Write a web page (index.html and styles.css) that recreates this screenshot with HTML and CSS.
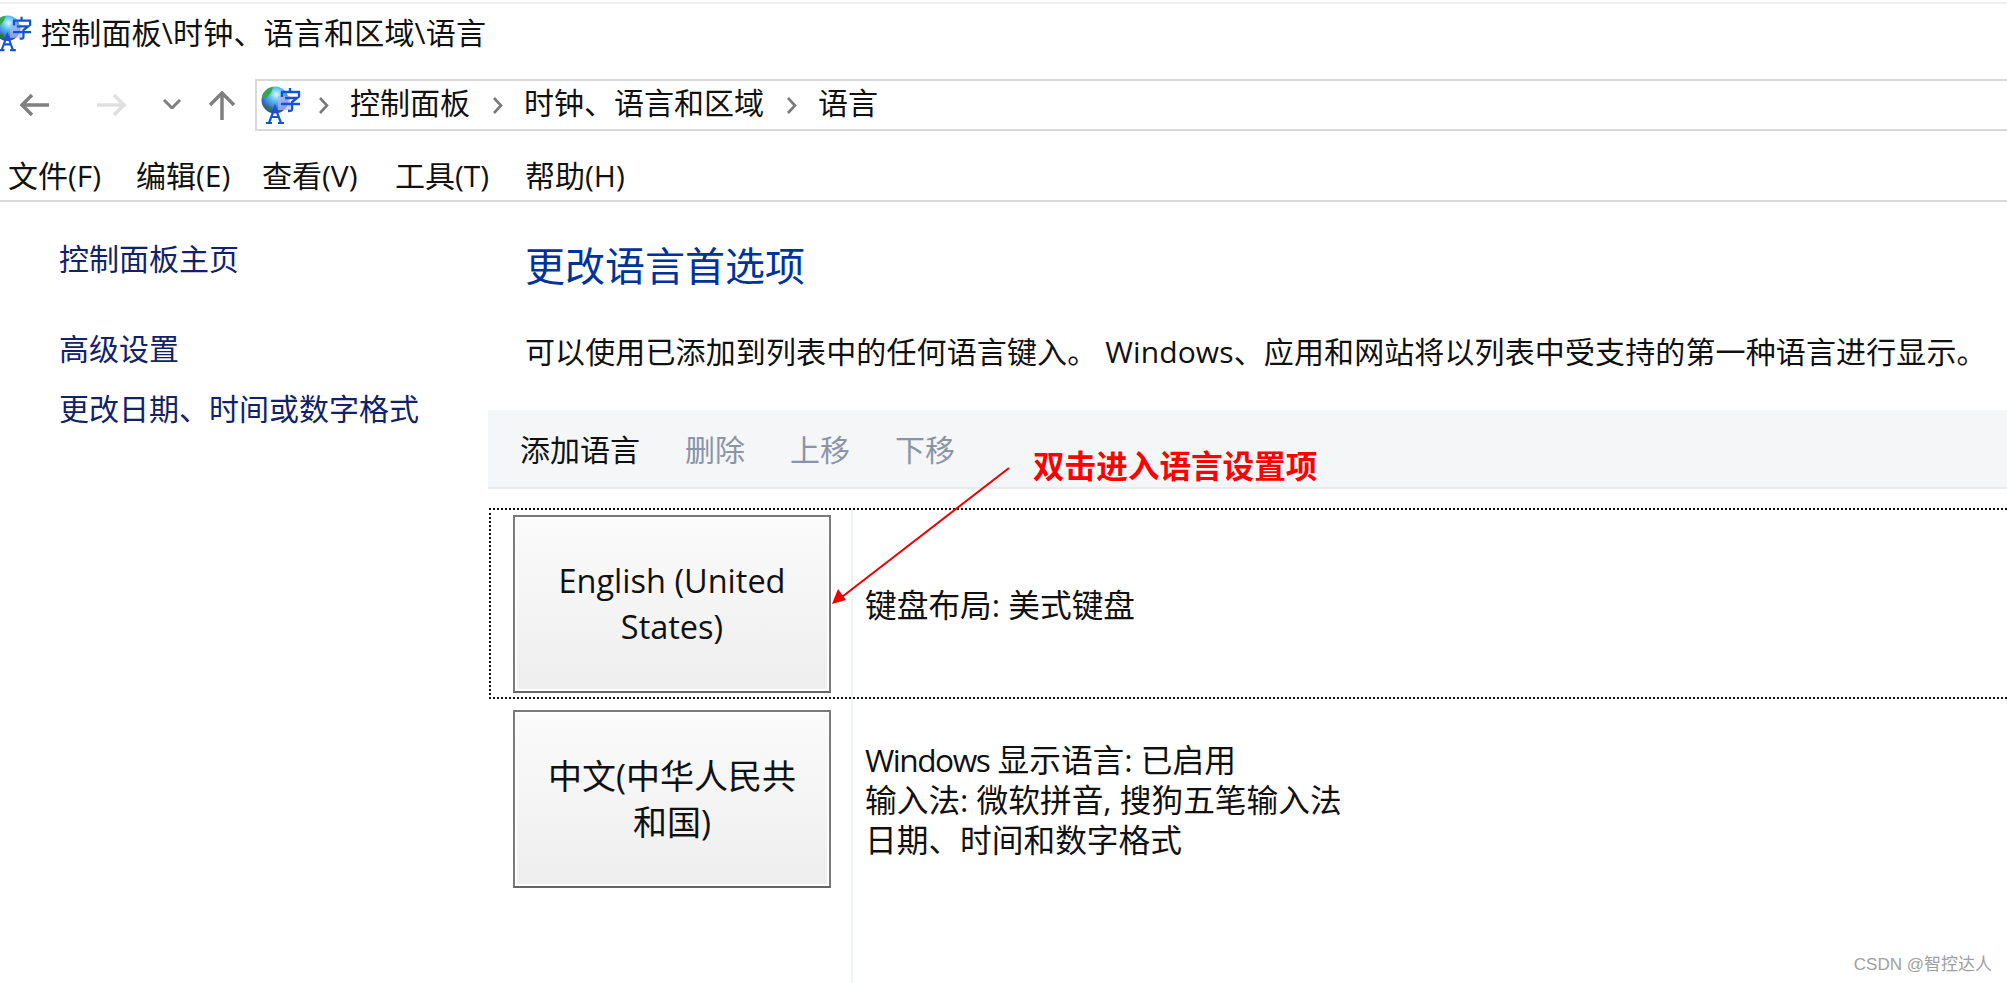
FILE: index.html
```html
<!DOCTYPE html>
<html lang="zh-CN">
<head>
    <meta charset="UTF-8">
    <title>控制面板\时钟、语言和区域\语言</title>
    <link rel="stylesheet" href="styles.css">
</head>
<body>
    <svg width="0" height="0" class="defs">
        <defs>
            <radialGradient id="globeFill" cx="0.55" cy="0.3" r="0.75">
                <stop offset="0" stop-color="#d8f8ff"/>
                <stop offset="0.35" stop-color="#55bdf0"/>
                <stop offset="0.7" stop-color="#3a6cc4"/>
                <stop offset="1" stop-color="#26407c"/>
            </radialGradient>
            <symbol id="langIcon" viewBox="0 0 40 38">
                <circle cx="14" cy="14" r="13.5" fill="url(#globeFill)"/>
                <path d="M1 12c1-6 5-10 11-11-1 3-1 5-4 8-2 2-4 4-7 3z" fill="#35a84a"/>
                <path d="M4 20c3-1 5 0 6 3l-2 2c-2-1-3-3-4-5z" fill="#2c7f3a"/>
                <path d="M17 10h12v14H17z" fill="#b4b8f0" opacity="0.7"/>
                <path d="M20 6h19M29 2v4M21 6v5M38 6v5M24 12h12l-5 4v7c0 2-1 2-4 2M20 18h19" fill="none" stroke="#1552d8" stroke-width="2.4"/>
                <path d="M8 37l6-16 6 16M10 31h8M5 37h6M17 37h6" fill="none" stroke="#1552d8" stroke-width="2.2"/>
            </symbol>
        </defs>
    </svg>

    <div class="title-bar">
        <svg class="title-icon"><use href="#langIcon"/></svg>
        <span>控制面板\时钟、语言和区域\语言</span>
    </div>

    <div class="nav-bar">
        <div class="nav-buttons">
            <svg class="nav-back" width="30" height="24" viewBox="0 0 30 24"><path d="M30 12H3M13 2L3 12l10 10" fill="none" stroke="#808080" stroke-width="3.5"/></svg>
            <svg class="nav-forward" width="30" height="24" viewBox="0 0 30 24"><path d="M0 12h27M17 2l10 10-10 10" fill="none" stroke="#e0e0e0" stroke-width="3.5"/></svg>
            <svg class="nav-down" width="18" height="10" viewBox="0 0 18 10"><path d="M1 1l8 8 8-8" fill="none" stroke="#808080" stroke-width="3"/></svg>
            <svg class="nav-up" width="28" height="29" viewBox="0 0 28 29"><path d="M14 29V3M2 14L14 2l12 12" fill="none" stroke="#808080" stroke-width="3.5"/></svg>
        </div>
        <div class="address">
            <svg class="address-icon"><use href="#langIcon"/></svg>
            <svg class="crumb-sep" width="11" height="17" viewBox="0 0 11 17"><path d="M2 1l7 7.5L2 16" fill="none" stroke="#7a7a7a" stroke-width="2.6"/></svg>
            <span>控制面板</span>
            <svg class="crumb-sep" width="11" height="17" viewBox="0 0 11 17"><path d="M2 1l7 7.5L2 16" fill="none" stroke="#7a7a7a" stroke-width="2.6"/></svg>
            <span>时钟、语言和区域</span>
            <svg class="crumb-sep" width="11" height="17" viewBox="0 0 11 17"><path d="M2 1l7 7.5L2 16" fill="none" stroke="#7a7a7a" stroke-width="2.6"/></svg>
            <span>语言</span>
        </div>
    </div>

    <div class="menu-bar">
        <span>文件(F)</span>
        <span>编辑(E)</span>
        <span>查看(V)</span>
        <span>工具(T)</span>
        <span>帮助(H)</span>
    </div>

    <div class="main">
        <div class="sidebar">
            <a class="side-home">控制面板主页</a>
            <a class="side-link">高级设置</a>
            <a class="side-link">更改日期、时间或数字格式</a>
        </div>
        <div class="content">
            <h1>更改语言首选项</h1>
            <p class="intro">可以使用已添加到列表中的任何语言键入。 Windows、应用和网站将以列表中受支持的第一种语言进行显示。</p>
            <div class="toolbar">
                <span>添加语言</span>
                <span class="disabled">删除</span>
                <span class="disabled">上移</span>
                <span class="disabled">下移</span>
            </div>
            <div class="lang-list">
                <div class="lang-row selected">
                    <div class="lang-btn latin">English (United States)</div>
                    <div class="lang-info">键盘布局: 美式键盘</div>
                </div>
                <div class="lang-row">
                    <div class="lang-btn">中文(中华人民共和国)</div>
                    <div class="lang-info">
                        <span class="win-word">Windows</span> 显示语言: 已启用<br>
                        输入法: 微软拼音, 搜狗五笔输入法<br>
                        日期、时间和数字格式
                    </div>
                </div>
            </div>
        </div>
    </div>

    <!-- annotation added over the screenshot -->
    <svg class="note-arrow" width="190" height="150" viewBox="0 0 190 150">
        <path d="M180 2L9 134" fill="none" stroke="#f00000" stroke-width="2"/>
        <path d="M3 138l6-15 8 11z" fill="#f00000"/>
    </svg>
    <div class="note-text">双击进入语言设置项</div>
    <div class="watermark">CSDN @智控达人</div>
</body>
</html>
```

FILE: styles.css
```css
html, body {
	height: 100%;
}
body {
	margin: 0;
	position: relative;
	overflow: hidden;
	background-color: #fff;
	color: #111;
	font-family: "Open Sans", "Noto Sans CJK SC", sans-serif;
	font-size: 30px;
	line-height: 40px;
}
.defs {
	position: absolute;
}
.title-bar {
	height: 67px;
	margin-top: 2px;
	border-top: 2px solid #f0f0f0;
	display: flex;
	align-items: center;
	font-size: 30px;
	letter-spacing: 0.2px;
	box-sizing: border-box;
	padding-bottom: 8px;
}
.title-icon {
	width: 38px;
	height: 38px;
	margin-left: -6px;
	margin-right: 9px;
	flex-shrink: 0;
}
.nav-bar {
	height: 52px;
	margin-top: 10px;
	display: flex;
	align-items: stretch;
}
.nav-buttons {
	width: 255px;
	flex-shrink: 0;
	display: flex;
	align-items: center;
	padding-left: 19px;
	box-sizing: border-box;
}
.nav-forward {
	margin-left: 48px;
}
.nav-down {
	margin-left: 36px;
	margin-top: -2px;
}
.nav-up {
	margin-left: 27px;
}
.address {
	flex: 1;
	border: 2px solid #d9d9d9;
	border-right: none;
	display: flex;
	align-items: center;
	padding-left: 4px;
}
.address-icon {
	width: 40px;
	height: 38px;
	margin-right: 17px;
}
.crumb-sep {
	margin-right: 21px;
}
.address span {
	margin-right: 22px;
	margin-bottom: 4px;
}
.menu-bar {
	height: 71px;
	border-bottom: 2px solid #d9d9d9;
	box-sizing: border-box;
	display: grid;
	grid-template-columns: 128px 126px 133px 130px auto;
	align-items: center;
	padding: 20px 0 0 8px;
}
.main {
	display: flex;
	height: 781px;
}
.sidebar {
	width: 488px;
	flex-shrink: 0;
	padding: 37px 0 0 59px;
	box-sizing: border-box;
	color: #12226a;
}
.sidebar a {
	display: block;
	white-space: nowrap;
}
.side-home {
	margin-bottom: 50px;
}
.side-link {
	margin-bottom: 20px;
}
.content {
	flex: 1;
	min-width: 0;
	display: flex;
	flex-direction: column;
}
h1 {
	margin: 39px 0 0 37px;
	font-size: 40px;
	line-height: 50px;
	font-weight: normal;
	color: #003399;
}
.intro {
	margin: 41px 0 0 37px;
	letter-spacing: 0.12px;
	white-space: nowrap;
}
.toolbar {
	margin-top: 38px;
	height: 79px;
	flex-shrink: 0;
	background-color: #f4f6f8;
	border-bottom: 2px solid #e8eaed;
	box-sizing: border-box;
	display: flex;
	align-items: center;
	gap: 45px;
	padding: 2px 0 0 32px;
}
.disabled {
	color: #8a94a8;
}
.lang-list {
	flex: 1;
	position: relative;
	padding-top: 19px;
}
.lang-list::before {
	content: "";
	position: absolute;
	left: 363px;
	top: 18px;
	bottom: 0;
	width: 2px;
	background-color: #eef3fb;
}
.lang-row {
	display: flex;
	align-items: center;
	height: 191px;
	margin: 0 0 4px 1px;
	box-sizing: border-box;
	padding-left: 22px;
	border: 2px solid transparent;
	border-right: none;
}
.lang-row.selected {
	border: 2px dotted #111;
	border-right: none;
}
.lang-btn {
	width: 318px;
	height: 178px;
	box-sizing: border-box;
	border: 2px solid #7a7a7a;
	border-bottom-color: #666;
	outline: 2px solid #fff;
	outline-offset: -4px;
	background: linear-gradient(#fbfbfb, #eeeeee);
	display: flex;
	align-items: center;
	justify-content: center;
	text-align: center;
	padding: 0 30px;
	font-size: 34px;
	line-height: 46px;
	flex-shrink: 0;
}
.lang-btn.latin {
	font-size: 32.5px;
}
.lang-info {
	margin-left: 34px;
	padding-top: 3px;
	font-size: 31.7px;
	white-space: nowrap;
	position: relative;
}
.win-word {
	letter-spacing: -1.5px;
}
.note-arrow {
	position: absolute;
	left: 829px;
	top: 466px;
}
.note-text {
	position: absolute;
	left: 1033px;
	top: 446px;
	color: #ff0000;
	font-size: 31.6px;
	font-weight: bold;
	white-space: nowrap;
}
.watermark {
	position: absolute;
	right: 15px;
	top: 953px;
	font-family: "Liberation Sans", "Noto Sans CJK SC", sans-serif;
	font-size: 17px;
	line-height: 24px;
	color: #a0a0a0;
	white-space: nowrap;
}
```
